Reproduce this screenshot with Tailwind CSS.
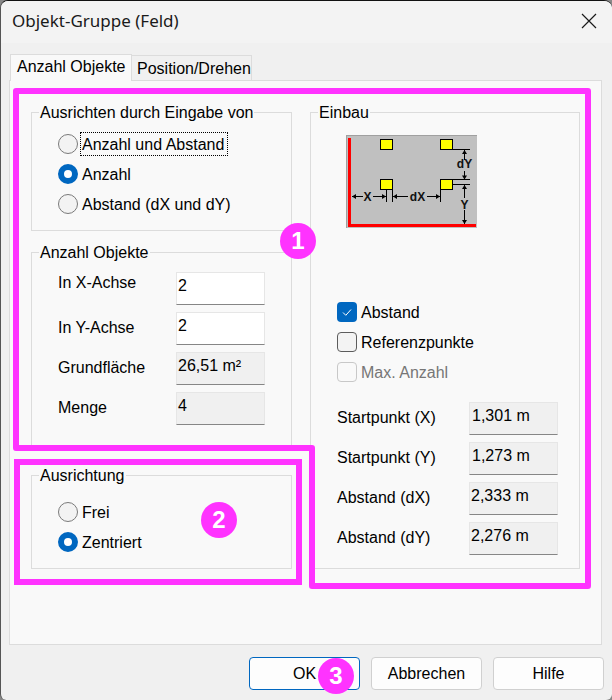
<!DOCTYPE html>
<html lang="de">
<head>
    <meta charset="UTF-8">
    <meta name="viewport" content="width=device-width, initial-scale=1.0">
    <title>Objekt-Gruppe (Feld)</title>
    <script src="https://cdn.jsdelivr.net/npm/@tailwindcss/browser@4"></script>
</head>
<body class="bg-[#888]">
    <div class="relative w-[612px] h-[700px] overflow-hidden bg-[#f0f0f0] border-t border-l border-t-[#111] border-l-[#555] rounded-t-[8px] rounded-b-[6px] font-['Liberation_Sans',Arial,sans-serif] text-[16px] leading-[24px] text-black">

        <!-- title bar -->
        <div class="h-[42px] bg-[#f3f3f3] flex items-center justify-between pl-[11px] pr-[15px] pb-[2px]">
            <span class="font-['Noto_Sans',sans-serif] text-[17px] text-[#1a1a1a]">Objekt-Gruppe (Feld)</span>
            <svg class="w-[16px] h-[16px]" viewBox="0 0 16 16" fill="none" stroke="#1a1a1a" stroke-width="1.2">
                <path d="M1 1l14 14M15 1L1 15"></path>
            </svg>
        </div>

        <!-- tabs -->
        <div class="h-[37px] pl-[9px] pt-[11px] flex items-end">
            <div class="relative z-10 w-[122px] h-[27px] -mb-px bg-[#f9f9f9] border border-b-0 border-[#dcdcdc] pl-[6px]">Anzahl Objekte</div>
            <div class="w-[121px] h-[25px] -ml-px bg-[#f0f0f0] border border-b-0 border-[#dcdcdc] pl-[5px] leading-[26px]">Position/Drehen</div>
        </div>

        <!-- tab page -->
        <div class="ml-[8px] w-[593px] h-[565px] bg-[#f9f9f9] border border-[#dcdcdc] pl-[21px] pt-[31px] flex gap-[18px]">
            <!-- left column -->
            <div class="w-[261px] flex flex-col">
                <div class="relative h-[119px] border border-[#dcdcdc] pl-[26px] pt-[16px]">
                    <span class="absolute -top-[12px] left-[7px] px-[1px] bg-[#f9f9f9]">Ausrichten durch Eingabe von</span>
                    <div class="h-[30px] flex items-center gap-[3px]">
                        <span class="w-[20px] h-[20px] rounded-full border border-[#7a7a7a] bg-[#f3f3f3]"></span>
                        <span class="outline-1 outline-dotted outline-black h-[22px] leading-[24px] w-[146px] pl-[1px]">Anzahl und Abstand</span>
                    </div>
                    <div class="h-[30px] flex items-center gap-[4px]">
                        <span class="w-[20px] h-[20px] rounded-full border-[6px] border-[#0067c0] bg-white"></span>
                        <span class="pt-[2px]">Anzahl</span>
                    </div>
                    <div class="h-[30px] flex items-center gap-[4px]">
                        <span class="w-[20px] h-[20px] rounded-full border border-[#7a7a7a] bg-[#f3f3f3]"></span>
                        <span class="pt-[2px]">Abstand (dX und dY)</span>
                    </div>
                </div>

                <div class="relative mt-[21px] h-[194px] border border-[#dcdcdc] pl-[26px] pt-[19px]">
                    <span class="absolute -top-[12px] left-[7px] px-[1px] bg-[#f9f9f9]">Anzahl Objekte</span>
                    <div class="h-[40px] flex">
                        <span class="w-[118px] -mt-[1px]">In X-Achse</span>
                        <div class="w-[89px] h-[33px] bg-white border border-[#e6e6e6] border-b-[#868686] pl-[1px] pt-[1px]">2</div>
                    </div>
                    <div class="h-[40px] flex">
                        <span class="w-[118px] mt-[4px]">In Y-Achse</span>
                        <div class="w-[89px] h-[33px] bg-white border border-[#e6e6e6] border-b-[#868686] pl-[1px] pt-[1px]">2</div>
                    </div>
                    <div class="h-[40px] flex">
                        <span class="w-[118px] mt-[4px]">Grundfläche</span>
                        <div class="w-[89px] h-[33px] bg-[#f0f0f0] border border-[#e6e6e6] border-b-[#868686] pl-[1px] pt-[1px]">26,51 m²</div>
                    </div>
                    <div class="h-[40px] flex">
                        <span class="w-[118px] mt-[4px]">Menge</span>
                        <div class="w-[89px] h-[33px] bg-[#f0f0f0] border border-[#e6e6e6] border-b-[#868686] pl-[1px] pt-[1px]">4</div>
                    </div>
                </div>

                <div class="relative mt-[29px] h-[94px] border border-[#dcdcdc] pl-[26px] pt-[21px]">
                    <span class="absolute -top-[12px] left-[7px] px-[1px] bg-[#f9f9f9]">Ausrichtung</span>
                    <div class="h-[30px] flex items-center gap-[4px]">
                        <span class="w-[20px] h-[20px] rounded-full border border-[#7a7a7a] bg-[#f3f3f3]"></span>
                        <span class="pt-[2px]">Frei</span>
                    </div>
                    <div class="h-[30px] flex items-center gap-[4px]">
                        <span class="w-[20px] h-[20px] rounded-full border-[6px] border-[#0067c0] bg-white"></span>
                        <span class="pt-[2px]">Zentriert</span>
                    </div>
                </div>
            </div>

            <!-- right column -->
            <div class="relative w-[270px] h-[457px] border border-[#dcdcdc] pl-[26px]">
                <span class="absolute -top-[12px] left-[7px] px-[1px] bg-[#f9f9f9]">Einbau</span>

                <svg class="block ml-[9px] mt-[22px] w-[131px] h-[93px]" viewBox="0 0 131 93">
                    <rect width="131" height="93" fill="#c0c0c0"></rect>
                    <path d="M0 .5h131M.5 0v93" stroke="#a0a0a0" fill="none"></path>
                    <rect x="2" y="3" width="3" height="88" fill="#ff0000"></rect>
                    <rect x="2" y="89" width="128" height="3" fill="#ff0000"></rect>
                    <g fill="#ffff00" stroke="#000">
                        <rect x="34.5" y="4.5" width="12" height="10"></rect>
                        <rect x="94.5" y="4.5" width="12" height="10"></rect>
                        <rect x="34.5" y="44.5" width="12" height="10"></rect>
                        <rect x="94.5" y="44.5" width="12" height="10"></rect>
                    </g>
                    <path d="M107 14.5h17M107 44.5h17M107 49.5h17M40.5 55v12M46.5 55v12M94.5 55v12M6 61.5h11M27 61.5h13M47 61.5h15M81 61.5h13M118.5 15v10M118.5 36v9M118.5 50v13M118.5 75v14" stroke="#000" fill="none"></path>
                    <path d="M6 61.5l4-2.500v5zM40 61.5l-4-2.500v5zM47 61.500l4-2.500v5zM94 61.500l-4-2.500v5zM118.500 15l-2.500 4h5zM118.500 44.500l-2.500-4h5zM118.500 50l-2.500 4h5zM118.500 89l-2.500-4h5z"></path>
                    <g font-family="'Liberation Sans',sans-serif" font-size="12" font-weight="700" text-anchor="middle" fill="#111">
                        <text x="21.500" y="66">X</text>
                        <text x="71.500" y="66">dX</text>
                        <text x="118.500" y="33">dY</text>
                        <text x="118.500" y="73.500">Y</text>
                    </g>
                </svg>

                <div class="mt-[69px] h-[30px] flex items-center gap-[4px]">
                    <span class="w-[20px] h-[20px] rounded-[4px] bg-[#0067c0] flex items-center justify-center">
                        <svg class="w-[12px] h-[12px]" viewBox="0 0 12 12" fill="none" stroke="#fff" stroke-width="1">
                            <path d="M2 6.500l2.800 2.800L10 3.500"></path>
                        </svg>
                    </span>
                    <span class="pt-[2px]">Abstand</span>
                </div>
                <div class="h-[30px] flex items-center gap-[4px]">
                    <span class="w-[20px] h-[20px] rounded-[4px] border border-[#5c5c5c] bg-[#f3f3f3]"></span>
                    <span class="pt-[2px]">Referenzpunkte</span>
                </div>
                <div class="h-[30px] flex items-center gap-[4px]">
                    <span class="w-[20px] h-[20px] rounded-[4px] border border-[#c8c8c8] bg-[#f9f9f9]"></span>
                    <span class="pt-[2px] text-[#767676]">Max. Anzahl</span>
                </div>

                <div class="mt-[15px] h-[40px] flex">
                    <span class="w-[132px] mt-[4px]">Startpunkt (X)</span>
                    <div class="w-[89px] h-[33px] bg-[#f0f0f0] border border-[#e6e6e6] border-b-[#868686] pl-[2px] pt-[1px]">1,301 m</div>
                </div>
                <div class="h-[40px] flex">
                    <span class="w-[132px] mt-[4px]">Startpunkt (Y)</span>
                    <div class="w-[89px] h-[33px] bg-[#f0f0f0] border border-[#e6e6e6] border-b-[#868686] pl-[2px] pt-[1px]">1,273 m</div>
                </div>
                <div class="h-[40px] flex">
                    <span class="w-[132px] mt-[4px]">Abstand (dX)</span>
                    <div class="w-[89px] h-[33px] bg-[#f0f0f0] border border-[#e6e6e6] border-b-[#868686] pl-[1px] pt-[1px]">2,333 m</div>
                </div>
                <div class="h-[40px] flex">
                    <span class="w-[132px] mt-[4px]">Abstand (dY)</span>
                    <div class="w-[89px] h-[33px] bg-[#f0f0f0] border border-[#e6e6e6] border-b-[#868686] pl-[1px] pt-[1px]">2,276 m</div>
                </div>
            </div>
        </div>

        <!-- buttons -->
        <div class="pt-[12px] pr-[8px] flex justify-end gap-[11px]">
            <button class="w-[111px] h-[33px] rounded-[4px] bg-[#fdfdfd] border border-[#0067c0]">OK</button>
            <button class="w-[111px] h-[33px] rounded-[4px] bg-[#fdfdfd] border border-[#d0d0d0]">Abbrechen</button>
            <button class="w-[111px] h-[33px] rounded-[4px] bg-[#fdfdfd] border border-[#d0d0d0]">Hilfe</button>
        </div>

        <!-- annotations drawn over the dialog -->
        <svg class="absolute -left-px -top-px w-[612px] h-[700px] pointer-events-none" viewBox="0 0 612 700" fill="none" stroke="#ff33ff" stroke-width="6" stroke-linejoin="round">
            <path d="M16 91H588V586H312V448H16Z"></path>
            <rect x="17" y="462" width="282" height="120" stroke-linejoin="miter"></rect>
        </svg>
        <div class="absolute left-[279px] top-[222px] w-[36px] h-[36px] rounded-full bg-[#ff33ff] text-white font-bold text-[24px] leading-[36px] text-center">1</div>
        <div class="absolute left-[200px] top-[501px] w-[36px] h-[36px] rounded-full bg-[#ff33ff] text-white font-bold text-[24px] leading-[36px] text-center">2</div>
        <div class="absolute left-[317px] top-[657px] w-[36px] h-[36px] rounded-full bg-[#ff33ff] text-white font-bold text-[24px] leading-[36px] text-center">3</div>
    </div>
</body>
</html>
